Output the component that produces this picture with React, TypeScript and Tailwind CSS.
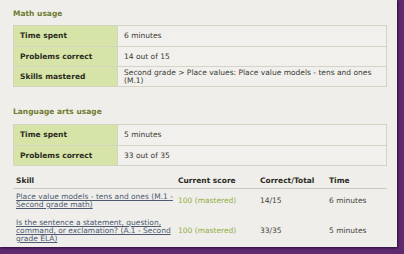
import React from 'react';

type Row = { label: string; value: React.ReactNode };

const mathRows: Row[] = [
  { label: 'Time spent', value: '6 minutes' },
  { label: 'Problems correct', value: '14 out of 15' },
  {
    label: 'Skills mastered',
    value: (
      <span className="block leading-[8px]">
        Second grade &gt; Place values: Place value models - tens and ones
        <br />
        (M.1)
      </span>
    ),
  },
];

const languageRows: Row[] = [
  { label: 'Time spent', value: '5 minutes' },
  { label: 'Problems correct', value: '33 out of 35' },
];

const skills = [
  {
    lines: ['Place value models - tens and ones (M.1 -', 'Second grade math)'],
    score: '100 (mastered)',
    ratio: '14/15',
    time: '6 minutes',
  },
  {
    lines: ['Is the sentence a statement, question,', 'command, or exclamation? (A.1 - Second', 'grade ELA)'],
    score: '100 (mastered)',
    ratio: '33/35',
    time: '5 minutes',
  },
];

function UsageTable({ rows }: { rows: Row[] }) {
  return (
    <div className="w-[374px] border border-[#d5d3c3]">
      {rows.map((row, i) => (
        <div
          key={row.label}
          className={`grid grid-cols-[104px_1fr] h-[20px] ${i > 0 ? 'border-t border-[#d5d3c3]' : ''}`}
        >
          <div className="bg-[#d6e4a7] border-r border-[#d5d3c3] pl-[6px] flex items-center font-bold text-[#2a2a22]">
            {row.label}
          </div>
          <div className="bg-[#f1f0ec] pl-[6px] flex items-center text-[#3a3a34] whitespace-nowrap">{row.value}</div>
        </div>
      ))}
    </div>
  );
}

export default function App() {
  return (
    <div className="w-[404px] h-[254px] bg-[#5e2a70]">
      <div
        className="w-[397px] h-[247px] bg-[#efeeea] pl-[13px] pt-[9px] text-[7.5px] leading-[8px] shadow-[1px_1px_2px_#2c0c38]"
        style={{ fontFamily: '"DejaVu Sans", Verdana, sans-serif' }}
      >
        <h2 className="h-[10px] leading-[10px] font-bold text-[#6f7b30] mb-[6px]">Math usage</h2>
        <UsageTable rows={mathRows} />

        <h2 className="h-[10px] leading-[10px] font-bold text-[#6f7b30] mt-[20px] mb-[7px]">Language arts usage</h2>
        <UsageTable rows={languageRows} />

        <div className="w-[374px] mt-[8px]">
          <div className="grid grid-cols-[165px_82px_69px_1fr] h-[15px] items-center border-b border-[#cac8ba] font-bold text-[#2a2a22]">
            <div className="pl-[3px]">Skill</div>
            <div>Current score</div>
            <div>Correct/Total</div>
            <div>Time</div>
          </div>
          {skills.map((s, idx) => (
            <div
              key={s.ratio}
              className={`grid grid-cols-[165px_82px_69px_1fr] ${idx === 0 ? 'pt-[4px]' : 'pt-[5px]'} pb-[5px] items-center text-[#44443e] whitespace-nowrap`}
            >
              <a href="#" className="pl-[3px] underline text-[#4d5a72]">
                {s.lines.map((line, i) => (
                  <span key={i} className="block">
                    {line}
                  </span>
                ))}
              </a>
              <div className="text-[#93ad45]">{s.score}</div>
              <div>{s.ratio}</div>
              <div>{s.time}</div>
            </div>
          ))}
        </div>
      </div>
    </div>
  );
}
